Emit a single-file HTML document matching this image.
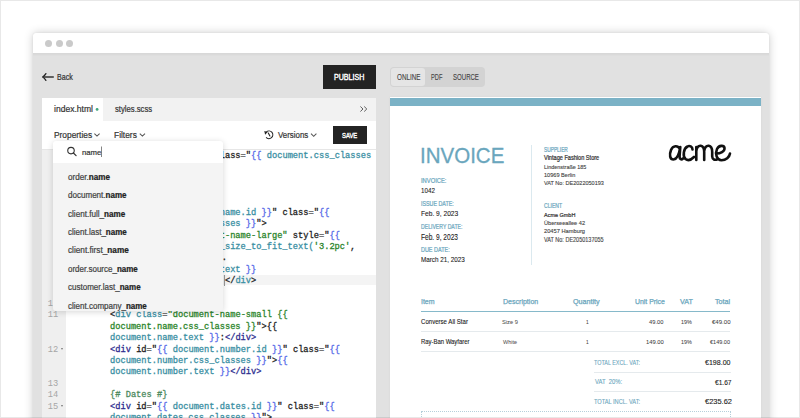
<!DOCTYPE html>
<html><head><meta charset="utf-8">
<style>
html,body{margin:0;padding:0;}
body{width:800px;height:418px;overflow:hidden;position:relative;background:#fff;font-family:"Liberation Sans",sans-serif;}
.a{position:absolute;}
.tx{position:absolute;line-height:1;white-space:pre;-webkit-text-stroke:0.2px currentColor;transform-origin:0 0;}
.tx b{font-weight:700;}
#win{position:absolute;left:33px;top:33px;width:736px;height:400px;background:#e1e1e1;border-radius:3px 3px 0 0;box-shadow:0 0 10px rgba(0,0,0,0.2), 0 0 2px rgba(0,0,0,0.08);}
#title{position:absolute;left:33px;top:33px;width:736px;height:20px;background:#fff;border-radius:3px 3px 0 0;}
.dot{position:absolute;top:39.8px;width:7px;height:7px;border-radius:50%;background:#cacaca;}
#code{position:absolute;left:110px;top:0;width:400px;height:418px;transform:scaleX(0.9362);transform-origin:0 0;}
.cr{position:absolute;left:0;line-height:1;white-space:pre;-webkit-text-stroke:0.3px currentColor;font-family:"Liberation Mono",monospace;font-size:9.30px;}
.gn{position:absolute;right:741.6px;line-height:1;white-space:pre;font-family:"Liberation Mono",monospace;font-size:9.30px;color:#a6a6a6;transform:scaleX(0.9362);transform-origin:100% 0;}
.fold{position:absolute;left:61px;width:0;height:0;border-left:1.6px solid transparent;border-right:1.6px solid transparent;border-top:2.2px solid #777;}
</style></head><body>
<div id="win"></div>
<div id="title"></div>
<div class="a" style="left:33px;top:53px;width:736px;height:3px;background:linear-gradient(rgba(0,0,0,0.045),rgba(0,0,0,0.03) 60%,rgba(0,0,0,0));"></div>
<div class="dot" style="left:44.8px"></div>
<div class="dot" style="left:55.6px"></div>
<div class="dot" style="left:66.4px"></div>

<!-- back arrow -->
<svg class="a" style="left:0;top:0" width="800" height="418">
  <path d="M43.5 77 H53.8" fill="none" stroke="#333" stroke-width="1.5"/><path d="M45.9 73.6 Q44.6 75.9 42.6 77 Q44.6 78.1 45.9 80.4" fill="none" stroke="#222" stroke-width="1.25" stroke-linecap="round" stroke-linejoin="round"/>
</svg>

<!-- publish button -->
<div class="a" style="left:323px;top:65px;width:53px;height:24px;background:#232323;"></div>

<!-- editor panel -->
<div class="a" style="left:42px;top:97.5px;width:334px;height:23px;background:#f2f2f2;"></div>
<div class="a" style="left:42px;top:97.5px;width:60.6px;height:23px;background:#fff;"></div>
<svg class="a" style="left:0;top:0" width="800" height="418"><circle cx="97.1" cy="109.4" r="1.4" fill="#3fa67d"/></svg>
<div class="a" style="left:42px;top:120.5px;width:334px;height:28px;background:#fff;"></div>
<div class="a" style="left:42px;top:148.5px;width:334px;height:270px;background:#fff;"></div>
<div class="a" style="left:42px;top:148.5px;width:24px;height:270px;background:#efefef;"></div>
<div class="a" style="left:42px;top:148.5px;width:334px;height:1px;background:#e6e6e6;"></div>
<div class="a" style="left:66px;top:274.7px;width:310px;height:10.8px;background:#f4f4f4;"></div>
<div class="a" style="left:224.3px;top:275px;width:0.9px;height:10.5px;background:#999;"></div>

<svg class="a" style="left:0;top:0" width="800" height="418">
  <!-- >> -->
  <path d="M360.4 106.5 L363 109 L360.4 111.5 M364.2 106.5 L366.8 109 L364.2 111.5" fill="none" stroke="#555" stroke-width="0.95"/>
  <!-- chevrons -->
  <path d="M94.4 133.6 L97 136.1 L99.6 133.6" fill="none" stroke="#555" stroke-width="1.05"/>
  <path d="M139.8 133.6 L142.4 136.1 L145 133.6" fill="none" stroke="#555" stroke-width="1.05"/>
  <path d="M311 133.7 L313.7 136.3 L316.4 133.7" fill="none" stroke="#555" stroke-width="1.05"/>
  <!-- history icon -->
  <path d="M266.4 131.9 A3.85 3.85 0 1 1 266.1 137.4" fill="none" stroke="#222" stroke-width="1.1"/>
  <path d="M264.3 131.0 L267.7 132.1 L265.1 134.7 Z" fill="#222"/>
  <path d="M268.3 133.0 L269.9 136.0" fill="none" stroke="#222" stroke-width="1.1" stroke-linecap="round"/>
</svg>
<div class="a" style="left:333px;top:126px;width:34px;height:18px;background:#232323;"></div>

<!-- code -->
<div id="code">
<div class="cr" style="top:150.77px;"><span style="color:#222">                    cl</span><span style="color:#222">ass</span><span style="color:#555">=</span><span style="color:#222">&quot;</span><span style="color:#5468e8">{{</span><span style="color:#3a8fa3"> document.css_classes</span></div>
<div class="cr" style="top:207.77px;"><span style="color:#222">                     </span><span style="color:#3a8fa3">name.id</span><span style="color:#5468e8"> }}</span><span style="color:#222">&quot;</span><span style="color:#222"> class</span><span style="color:#555">=</span><span style="color:#222">&quot;</span><span style="color:#5468e8">{{</span></div>
<div class="cr" style="top:219.17px;"><span style="color:#222">                     </span><span style="color:#3a8fa3">sses</span><span style="color:#5468e8"> }}</span><span style="color:#222">&quot;&gt;</span></div>
<div class="cr" style="top:230.57px;"><span style="color:#222">                     </span><span style="color:#2b852b">t-name-large&quot;</span><span style="color:#222"> style</span><span style="color:#555">=</span><span style="color:#222">&quot;</span><span style="color:#5468e8">{{</span></div>
<div class="cr" style="top:241.97px;"><span style="color:#222">                     </span><span style="color:#3a8fa3">_size_to_fit_text(</span><span style="color:#2b852b">&#x27;3.2pc&#x27;</span><span style="color:#222">,</span></div>
<div class="cr" style="top:253.37px;left:2.2px;"><span style="color:#222">                     </span><span style="color:#222">.</span></div>
<div class="cr" style="top:264.77px;"><span style="color:#222">                     </span><span style="color:#3a8fa3">text</span><span style="color:#5468e8"> }}</span></div>
<div class="cr" style="top:276.17px;"><span style="color:#222">                      </span><span style="color:#222">&lt;/</span><span style="color:#3a8fa3">div</span><span style="color:#222">&gt;</span></div>
<div class="cr" style="top:310.37px;"><span style="color:#222">&lt;</span><span style="color:#3a8fa3">div</span><span style="color:#3a8fa3"> class</span><span style="color:#555">=</span><span style="color:#2b852b">&quot;document-name-small {{</span></div>
<div class="cr" style="top:321.77px;"><span style="color:#2b852b">document.name.css_classes }}</span><span style="color:#222">&quot;&gt;{{</span></div>
<div class="cr" style="top:333.17px;"><span style="color:#3a8fa3">document.name.text</span><span style="color:#5468e8"> }}</span><span style="color:#222">:</span><span style="color:#2d2d8f">&lt;/div&gt;</span></div>
<div class="cr" style="top:344.57px;"><span style="color:#2d2d8f">&lt;div</span><span style="color:#222"> id</span><span style="color:#555">=</span><span style="color:#222">&quot;</span><span style="color:#5468e8">{{</span><span style="color:#3a8fa3"> document.number.id</span><span style="color:#5468e8"> }}</span><span style="color:#222">&quot;</span><span style="color:#222"> class</span><span style="color:#555">=</span><span style="color:#222">&quot;</span><span style="color:#5468e8">{{</span></div>
<div class="cr" style="top:355.97px;"><span style="color:#3a8fa3">document.number.css_classes</span><span style="color:#5468e8"> }}</span><span style="color:#222">&quot;&gt;</span><span style="color:#5468e8">{{</span></div>
<div class="cr" style="top:367.37px;"><span style="color:#3a8fa3">document.number.text</span><span style="color:#5468e8"> }}</span><span style="color:#2d2d8f">&lt;/div&gt;</span></div>
<div class="cr" style="top:390.17px;"><span style="color:#4d8a5e">{# Dates #}</span></div>
<div class="cr" style="top:401.57px;"><span style="color:#2d2d8f">&lt;div</span><span style="color:#222"> id</span><span style="color:#555">=</span><span style="color:#222">&quot;</span><span style="color:#5468e8">{{</span><span style="color:#3a8fa3"> document.dates.id</span><span style="color:#5468e8"> }}</span><span style="color:#222">&quot;</span><span style="color:#222"> class</span><span style="color:#555">=</span><span style="color:#222">&quot;</span><span style="color:#5468e8">{{</span></div>
<div class="cr" style="top:412.97px;"><span style="color:#3a8fa3">document.dates.css_classes</span><span style="color:#5468e8"> }}</span><span style="color:#222">&quot;&gt;</span></div>
</div>
<div class="gn" style="top:298.97px">10</div>
<div class="gn" style="top:310.37px">11</div>
<div class="gn" style="top:344.57px">12</div>
<div class="gn" style="top:378.77px">13</div>
<div class="gn" style="top:390.17px">14</div>
<div class="gn" style="top:401.57px">15</div>
<div class="fold" style="top:347.90px"></div>
<div class="fold" style="top:404.90px"></div>

<!-- dropdown -->
<div class="a" style="left:53.4px;top:141px;width:170px;height:170px;background:#f4f4f4;box-shadow:0 1px 6px rgba(0,0,0,0.16);border-radius:3px;"></div>
<div class="a" style="left:53.4px;top:141px;width:170px;height:21.5px;background:#fff;border-radius:3px 3px 0 0;"></div>
<svg class="a" style="left:0;top:0" width="800" height="418">
  <circle cx="71" cy="150.6" r="3.25" fill="none" stroke="#333" stroke-width="1.1"/>
  <path d="M73.4 153 L76.1 155.7" stroke="#333" stroke-width="1.2" stroke-linecap="round"/>
  <rect x="101" y="146.5" width="0.8" height="10.5" fill="#666"/>
</svg>
<div class="a" style="left:53.4px;top:162.5px;width:170px;height:148.5px;overflow:hidden;">
<div class="tx" id="t9" style="left:14.30px;top:10.56px;font-size:8.30px;color:#444;-webkit-text-stroke-width:0.22px;transform:scaleX(0.9795);">order.<b style="color:#222">name</b></div>
<div class="tx" id="t10" style="left:14.30px;top:28.56px;font-size:8.30px;color:#444;-webkit-text-stroke-width:0.22px;transform:scaleX(0.9696);">document.<b style="color:#222">name</b></div>
<div class="tx" id="t11" style="left:14.30px;top:47.56px;font-size:8.30px;color:#444;-webkit-text-stroke-width:0.22px;transform:scaleX(0.9782);">client.full_<b style="color:#222">name</b></div>
<div class="tx" id="t12" style="left:14.30px;top:65.56px;font-size:8.30px;color:#444;-webkit-text-stroke-width:0.22px;transform:scaleX(0.9654);">client.last_<b style="color:#222">name</b></div>
<div class="tx" id="t13" style="left:14.30px;top:83.56px;font-size:8.30px;color:#444;-webkit-text-stroke-width:0.22px;transform:scaleX(0.9919);">client.first_<b style="color:#222">name</b></div>
<div class="tx" id="t14" style="left:14.30px;top:102.56px;font-size:8.30px;color:#444;-webkit-text-stroke-width:0.22px;transform:scaleX(0.9637);">order.source_<b style="color:#222">name</b></div>
<div class="tx" id="t15" style="left:14.30px;top:120.56px;font-size:8.30px;color:#444;-webkit-text-stroke-width:0.22px;transform:scaleX(0.9662);">customer.last_<b style="color:#222">name</b></div>
<div class="tx" id="t16" style="left:14.30px;top:139.56px;font-size:8.30px;color:#444;-webkit-text-stroke-width:0.22px;transform:scaleX(0.9655);">client.company_<b style="color:#222">name</b></div>
</div>

<!-- preview toggle -->
<div class="a" style="left:390px;top:67px;width:95px;height:19.5px;background:#d3d3d3;border-radius:4px;"></div>
<div class="a" style="left:391px;top:68px;width:34px;height:17.8px;background:#e5e5e5;border-radius:3px;"></div>

<!-- paper -->
<div class="a" style="left:389.7px;top:96.8px;width:371.3px;height:330px;background:#fff;box-shadow:0 0 2px rgba(0,0,0,0.06);"></div>
<div class="a" style="left:390px;top:97.6px;width:371px;height:8.3px;background:#7bb2c6;"></div>
<div class="a" style="left:531px;top:145px;width:1px;height:120px;background:#dbe9ef;"></div>

<!-- table lines -->
<div class="a" style="left:420.8px;top:310.5px;width:309.6px;height:1.5px;background:#86b9ca;"></div>
<div class="a" style="left:420.8px;top:330.9px;width:309.6px;height:1px;background:#e5eaed;"></div>
<div class="a" style="left:420.8px;top:351px;width:309.6px;height:1px;background:#e5eaed;"></div>
<div class="a" style="left:594.4px;top:372px;width:136.6px;height:1px;background:#e5eaed;"></div>
<div class="a" style="left:594.4px;top:391.2px;width:136.6px;height:1px;background:#e5eaed;"></div>
<div class="a" style="left:421px;top:410.5px;width:310px;height:20px;border-top:1px dotted #b5d0db;border-right:1px dotted #b5d0db;border-left:1px dotted #b5d0db;box-sizing:border-box;"></div>

<!-- acme logo -->
<svg class="a" style="left:0;top:0" width="800" height="418">
  <g fill="none" stroke="#111" stroke-width="2.6" stroke-linecap="round" stroke-linejoin="round">
    <path d="M679.5 148.5 C678 145.5 673 145 671 150 C669 155 670 159.5 673.5 159.5 C677 159.5 679 155 680.3 147 M680.3 147 L679.6 156 C679.4 159.5 681.5 160 683 158.5"/>
    <path d="M692.5 149.5 C692.5 146.5 689.5 145.3 687.5 146.5 C683.5 148.5 682.5 156 685.5 159 C688 161 691.5 159.5 694 157"/>
    <path d="M696.3 147 L696.3 160 M696.3 151 C697 146.5 699 145.6 700.8 145.8 C703.5 146.2 704.2 149 704.2 152 L704.2 160 M704.2 151 C705 146.5 707 145.6 708.8 145.8 C711.5 146.2 712.2 149 712.2 152 L712.2 156.5 C712.4 159.8 715 160.2 717 159.5"/>
    <path d="M716.5 153.5 C720 153.5 725 151.5 724.5 148 C724 145 719 145 717 149 C715 153.5 716.5 160.2 721.5 160.2 C726 160.2 729.5 157 730 153.5"/>
  </g>
</svg>

<div class="tx" id="t0" style="left:57.47px;top:74.11px;font-size:8.25px;color:#333;transform:scaleX(0.8570);">Back</div>
<div class="tx" id="t1" style="left:334.23px;top:74.11px;font-size:8.25px;color:#fff;-webkit-text-stroke-width:0.40px;transform:scaleX(0.8596);">PUBLISH</div>
<div class="tx" id="t2" style="left:53.75px;top:104.81px;font-size:8.60px;color:#333;transform:scaleX(0.9935);">index.html</div>
<div class="tx" id="t3" style="left:115.14px;top:104.81px;font-size:8.60px;color:#333;transform:scaleX(0.8935);">styles.scss</div>
<div class="tx" id="t4" style="left:53.65px;top:130.90px;font-size:8.50px;color:#333;transform:scaleX(0.9823);">Properties</div>
<div class="tx" id="t5" style="left:113.89px;top:130.90px;font-size:8.50px;color:#333;transform:scaleX(0.9882);">Filters</div>
<div class="tx" id="t6" style="left:278.06px;top:131.06px;font-size:8.30px;color:#333;transform:scaleX(0.9524);">Versions</div>
<div class="tx" id="t7" style="left:342.22px;top:131.66px;font-size:7.60px;color:#fff;-webkit-text-stroke-width:0.40px;transform:scaleX(0.7737);">SAVE</div>
<div class="tx" id="t8" style="left:82.37px;top:149.28px;font-size:8.05px;color:#333;transform:scaleX(0.9629);">name</div>
<div class="tx" id="t17" style="left:396.73px;top:74.11px;font-size:8.25px;color:#444;-webkit-text-stroke-width:0.12px;transform:scaleX(0.7667);">ONLINE</div>
<div class="tx" id="t18" style="left:431.38px;top:74.11px;font-size:8.25px;color:#444;-webkit-text-stroke-width:0.12px;transform:scaleX(0.6882);">PDF</div>
<div class="tx" id="t19" style="left:453.09px;top:74.11px;font-size:8.25px;color:#444;-webkit-text-stroke-width:0.12px;transform:scaleX(0.7342);">SOURCE</div>
<div class="tx" id="t20" style="left:419.76px;top:143.74px;font-size:22.80px;color:#6aa6bd;-webkit-text-stroke-width:0.30px;transform:scaleX(0.8997);">INVOICE</div>
<div class="tx" id="t21" style="left:420.80px;top:177.72px;font-size:6.35px;color:#6aa6bd;-webkit-text-stroke-width:0.22px;transform:scaleX(0.9131);">INVOICE:</div>
<div class="tx" id="t22" style="left:420.80px;top:187.00px;font-size:7.20px;color:#222;-webkit-text-stroke-width:0.10px;transform:scaleX(0.8654);">1042</div>
<div class="tx" id="t23" style="left:420.80px;top:200.72px;font-size:6.35px;color:#6aa6bd;-webkit-text-stroke-width:0.22px;transform:scaleX(0.8385);">ISSUE DATE:</div>
<div class="tx" id="t24" style="left:420.80px;top:209.75px;font-size:7.50px;color:#222;-webkit-text-stroke-width:0.10px;transform:scaleX(0.8840);">Feb. 9, 2023</div>
<div class="tx" id="t25" style="left:420.80px;top:223.72px;font-size:6.35px;color:#6aa6bd;-webkit-text-stroke-width:0.22px;transform:scaleX(0.8098);">DELIVERY DATE:</div>
<div class="tx" id="t26" style="left:420.80px;top:234.11px;font-size:8.25px;color:#222;-webkit-text-stroke-width:0.10px;transform:scaleX(0.7992);">Feb. 9, 2023</div>
<div class="tx" id="t27" style="left:420.80px;top:246.72px;font-size:6.35px;color:#6aa6bd;-webkit-text-stroke-width:0.22px;transform:scaleX(0.8593);">DUE DATE:</div>
<div class="tx" id="t28" style="left:420.80px;top:255.75px;font-size:7.50px;color:#222;-webkit-text-stroke-width:0.10px;transform:scaleX(0.8409);">March 21, 2023</div>
<div class="tx" id="t29" style="left:544.40px;top:146.72px;font-size:6.35px;color:#6aa6bd;-webkit-text-stroke-width:0.22px;transform:scaleX(0.7593);">SUPPLIER</div>
<div class="tx" id="t30" style="left:544.40px;top:154.72px;font-size:6.35px;color:#333;-webkit-text-stroke-width:0.22px;transform:scaleX(0.8813);">Vintage Fashion Store</div>
<div class="tx" id="t31" style="left:544.40px;top:165.19px;font-size:5.80px;color:#444;-webkit-text-stroke-width:0.12px;transform:scaleX(0.9393);">Lindenstraße 185</div>
<div class="tx" id="t32" style="left:544.40px;top:173.19px;font-size:5.80px;color:#444;-webkit-text-stroke-width:0.12px;transform:scaleX(0.9637);">10969 Berlin</div>
<div class="tx" id="t33" style="left:544.40px;top:181.19px;font-size:5.80px;color:#444;-webkit-text-stroke-width:0.12px;transform:scaleX(0.9529);">VAT No: DE2022050193</div>
<div class="tx" id="t34" style="left:544.40px;top:202.72px;font-size:6.35px;color:#6aa6bd;-webkit-text-stroke-width:0.22px;transform:scaleX(0.7979);">CLIENT</div>
<div class="tx" id="t35" style="left:544.40px;top:211.89px;font-size:6.15px;color:#333;-webkit-text-stroke-width:0.22px;transform:scaleX(0.8920);">Acme GmbH</div>
<div class="tx" id="t36" style="left:544.40px;top:221.19px;font-size:5.80px;color:#444;-webkit-text-stroke-width:0.12px;transform:scaleX(0.9738);">Überseeallee 42</div>
<div class="tx" id="t37" style="left:544.40px;top:229.19px;font-size:5.80px;color:#444;-webkit-text-stroke-width:0.12px;transform:scaleX(0.9865);">20457 Hamburg</div>
<div class="tx" id="t38" style="left:544.40px;top:236.72px;font-size:6.35px;color:#444;-webkit-text-stroke-width:0.12px;transform:scaleX(0.8673);">VAT No: DE2050137055</div>
<div class="tx" id="t39" style="left:420.80px;top:298.17px;font-size:7.00px;color:#6aa6bd;-webkit-text-stroke-width:0.25px;transform:scaleX(0.9959);">Item</div>
<div class="tx" id="t40" style="left:502.93px;top:298.17px;font-size:7.00px;color:#6aa6bd;-webkit-text-stroke-width:0.25px;transform:scaleX(1.0061);">Description</div>
<div class="tx" id="t41" style="left:573.47px;top:298.17px;font-size:7.00px;color:#6aa6bd;-webkit-text-stroke-width:0.25px;transform:scaleX(1.0233);">Quantity</div>
<div class="tx" id="t42" style="left:634.66px;top:298.17px;font-size:7.00px;color:#6aa6bd;-webkit-text-stroke-width:0.25px;transform:scaleX(0.9849);">Unit Price</div>
<div class="tx" id="t43" style="left:679.89px;top:298.17px;font-size:7.00px;color:#6aa6bd;-webkit-text-stroke-width:0.25px;transform:scaleX(1.0325);">VAT</div>
<div class="tx" id="t44" style="left:715.40px;top:298.17px;font-size:7.00px;color:#6aa6bd;-webkit-text-stroke-width:0.25px;transform:scaleX(1.0191);">Total</div>
<div class="tx" id="t45" style="left:420.80px;top:318.68px;font-size:6.40px;color:#222;-webkit-text-stroke-width:0.10px;transform:scaleX(0.9503);">Converse All Star</div>
<div class="tx" id="t46" style="left:502.41px;top:320.19px;font-size:5.80px;color:#555;-webkit-text-stroke-width:0.05px;transform:scaleX(0.9913);">Size 9</div>
<div class="tx" id="t47" style="left:585.99px;top:320.36px;font-size:5.60px;color:#444;-webkit-text-stroke-width:0.05px;transform:scaleX(0.8588);">1</div>
<div class="tx" id="t48" style="left:648.56px;top:320.36px;font-size:5.60px;color:#444;-webkit-text-stroke-width:0.05px;transform:scaleX(1.0306);">49.00</div>
<div class="tx" id="t49" style="left:681.44px;top:320.36px;font-size:5.60px;color:#444;-webkit-text-stroke-width:0.05px;transform:scaleX(0.9655);">19%</div>
<div class="tx" id="t50" style="left:712.20px;top:320.36px;font-size:5.60px;color:#444;-webkit-text-stroke-width:0.05px;transform:scaleX(1.0834);">€49.00</div>
<div class="tx" id="t51" style="left:420.80px;top:338.68px;font-size:6.40px;color:#222;-webkit-text-stroke-width:0.10px;transform:scaleX(0.9259);">Ray-Ban Wayfarer</div>
<div class="tx" id="t52" style="left:502.71px;top:340.19px;font-size:5.80px;color:#555;-webkit-text-stroke-width:0.05px;transform:scaleX(0.9438);">White</div>
<div class="tx" id="t53" style="left:585.99px;top:340.36px;font-size:5.60px;color:#444;-webkit-text-stroke-width:0.05px;transform:scaleX(0.8588);">1</div>
<div class="tx" id="t54" style="left:646.21px;top:340.36px;font-size:5.60px;color:#444;-webkit-text-stroke-width:0.05px;transform:scaleX(1.0447);">149.00</div>
<div class="tx" id="t55" style="left:681.44px;top:340.36px;font-size:5.60px;color:#444;-webkit-text-stroke-width:0.05px;transform:scaleX(0.9655);">19%</div>
<div class="tx" id="t56" style="left:710.07px;top:340.36px;font-size:5.60px;color:#444;-webkit-text-stroke-width:0.05px;transform:scaleX(0.9884);">€149.00</div>
<div class="tx" id="t57" style="left:594.40px;top:359.72px;font-size:6.35px;color:#6aa6bd;-webkit-text-stroke-width:0.10px;transform:scaleX(0.8525);">TOTAL EXCL. VAT:</div>
<div class="tx" id="t58" style="left:705.16px;top:358.66px;font-size:7.60px;color:#222;-webkit-text-stroke-width:0.12px;transform:scaleX(0.9282);">€198.00</div>
<div class="tx" id="t59" style="left:594.91px;top:378.72px;font-size:6.35px;color:#6aa6bd;-webkit-text-stroke-width:0.10px;transform:scaleX(0.9225);">VAT&nbsp; 20%:</div>
<div class="tx" id="t60" style="left:714.85px;top:378.66px;font-size:7.60px;color:#222;-webkit-text-stroke-width:0.12px;transform:scaleX(0.8662);">€1.67</div>
<div class="tx" id="t61" style="left:594.40px;top:398.72px;font-size:6.35px;color:#6aa6bd;-webkit-text-stroke-width:0.10px;transform:scaleX(0.8882);">TOTAL INCL. VAT:</div>
<div class="tx" id="t62" style="left:704.80px;top:397.66px;font-size:7.60px;color:#222;-webkit-text-stroke-width:0.12px;transform:scaleX(0.9811);">€235.62</div>

<!-- outer frame -->
<div class="a" style="left:0;top:0;width:800px;height:418px;box-sizing:border-box;border:1px solid rgba(0,0,0,0.09);"></div>
</body></html>
